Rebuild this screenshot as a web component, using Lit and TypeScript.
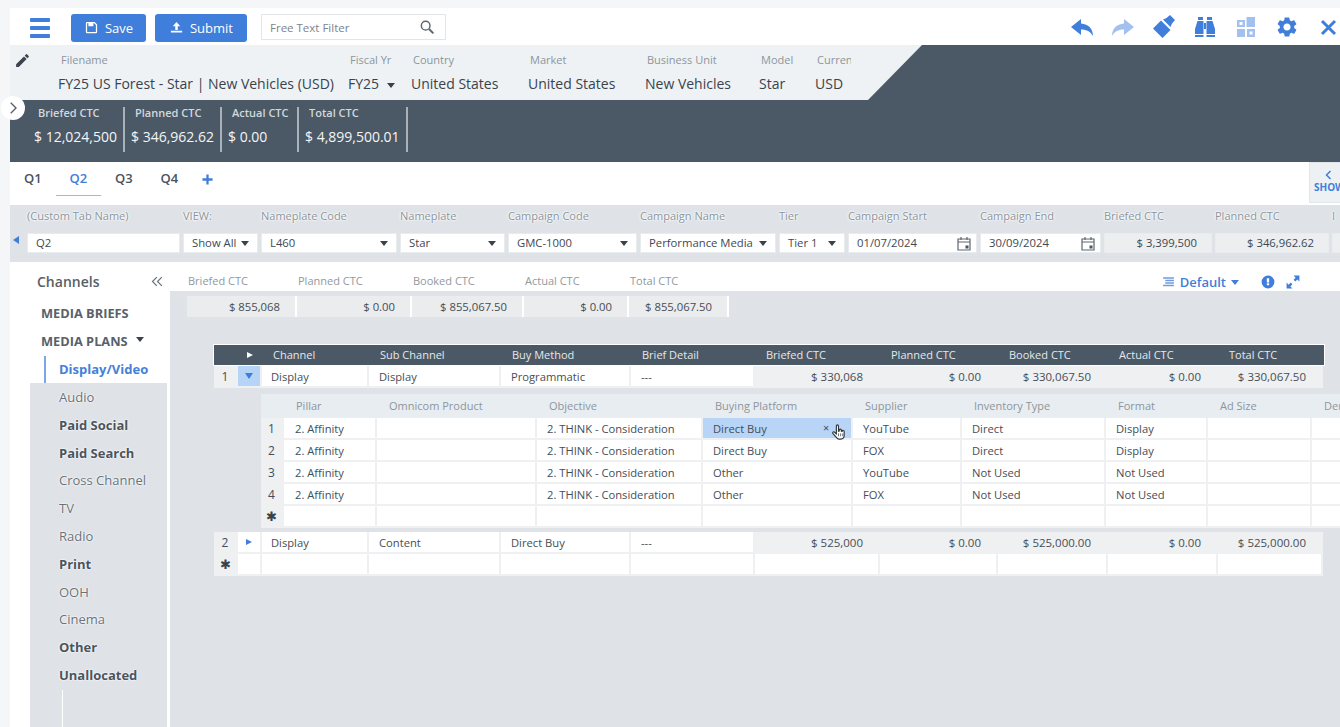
import { LitElement, html, css, svg } from "lit";
import { customElement } from "lit/decorators.js";

const ic = (body: unknown, cls = "ic") => html`<svg class=${cls} viewBox="0 0 24 24" fill="currentColor">${body}</svg>`;
const GEAR = "M19.14 12.94c.04-.3.06-.61.06-.94 0-.32-.02-.64-.07-.94l2.03-1.58a.49.49 0 0 0 .12-.61l-1.92-3.32a.488.488 0 0 0-.59-.22l-2.39.96c-.5-.38-1.03-.7-1.62-.94l-.36-2.54a.484.484 0 0 0-.48-.41h-3.84c-.24 0-.43.17-.47.41l-.36 2.54c-.59.24-1.13.57-1.62.94l-2.39-.96c-.22-.08-.47 0-.59.22L2.74 8.87c-.12.21-.08.47.12.61l2.03 1.58c-.05.3-.09.63-.09.94s.02.64.07.94l-2.03 1.58a.49.49 0 0 0-.12.61l1.92 3.32c.12.22.37.29.59.22l2.39-.96c.5.38 1.03.7 1.62.94l.36 2.54c.05.24.24.41.48.41h3.84c.24 0 .44-.17.47-.41l.36-2.54c.59-.24 1.13-.56 1.62-.94l2.39.96c.22.08.47 0 .59-.22l1.92-3.32c.12-.22.07-.47-.12-.61l-2.01-1.58zM12 15.6c-1.98 0-3.6-1.62-3.6-3.6s1.62-3.6 3.6-3.6 3.6 1.62 3.6 3.6-1.62 3.6-3.6 3.6z";

const cal = () => html`<svg class="cal" viewBox="0 0 14 15"><path d="M1 3h12v11H1z M1 6h12 M4 1v3 M10 1v3" fill="none" stroke="#5d6770" stroke-width="1.2"/><rect x="8.5" y="9.5" width="3" height="3" fill="#4a5560"/></svg>`;

const info = [
  ["Filename", "FY25 US Forest - Star | New Vehicles (USD)"],
  ["Fiscal Yr", "FY25"],
  ["Country", "United States"],
  ["Market", "United States"],
  ["Business Unit", "New Vehicles"],
  ["Model", "Star"],
  ["Currency", "USD"],
];
const totals = [
  ["Briefed CTC", "$ 12,024,500"],
  ["Planned CTC", "$ 346,962.62"],
  ["Actual CTC", "$ 0.00"],
  ["Total CTC", "$ 4,899,500.01"],
];
type F = { l: string; v: string; k: "text" | "sel" | "date" | "ro" };
const filters: F[] = [
  { l: "(Custom Tab Name)", v: "Q2", k: "text" },
  { l: "VIEW:", v: "Show All", k: "sel" },
  { l: "Nameplate Code", v: "L460", k: "sel" },
  { l: "Nameplate", v: "Star", k: "sel" },
  { l: "Campaign Code", v: "GMC-1000", k: "sel" },
  { l: "Campaign Name", v: "Performance Media", k: "sel" },
  { l: "Tier", v: "Tier 1", k: "sel" },
  { l: "Campaign Start", v: "01/07/2024", k: "date" },
  { l: "Campaign End", v: "30/09/2024", k: "date" },
  { l: "Briefed CTC", v: "$ 3,399,500", k: "ro" },
  { l: "Planned CTC", v: "$ 346,962.62", k: "ro" },
  { l: "I", v: "", k: "ro" },
];
const summary = [
  ["Briefed CTC", "$ 855,068"],
  ["Planned CTC", "$ 0.00"],
  ["Booked CTC", "$ 855,067.50"],
  ["Actual CTC", "$ 0.00"],
  ["Total CTC", "$ 855,067.50"],
];
const nav: [string, boolean][] = [
  ["Audio", false], ["Paid Social", true], ["Paid Search", true], ["Cross Channel", false],
  ["TV", false], ["Radio", false], ["Print", true], ["OOH", false], ["Cinema", false],
  ["Other", true], ["Unallocated", true],
];
const outerHead = ["Channel", "Sub Channel", "Buy Method", "Brief Detail", "Briefed CTC", "Planned CTC", "Booked CTC", "Actual CTC", "Total CTC"];
const subHead = ["Pillar", "Omnicom Product", "Objective", "Buying Platform", "Supplier", "Inventory Type", "Format", "Ad Size", "Demand"];
const subRows = [
  ["2. Affinity", "", "2. THINK - Consideration", "Direct Buy", "YouTube", "Direct", "Display", "", ""],
  ["2. Affinity", "", "2. THINK - Consideration", "Direct Buy", "FOX", "Direct", "Display", "", ""],
  ["2. Affinity", "", "2. THINK - Consideration", "Other", "YouTube", "Not Used", "Not Used", "", ""],
  ["2. Affinity", "", "2. THINK - Consideration", "Other", "FOX", "Not Used", "Not Used", "", ""],
  ["", "", "", "", "", "", "", "", ""],
];

@customElement("app-root")
export class AppRoot extends LitElement {
  static styles = css`
    :host { display: block; width: 1340px; height: 727px; overflow: hidden; font-family: "Open Sans", "Liberation Sans", sans-serif; color: #3b444d; background: #f5f6f7; }
    * { box-sizing: border-box; }
    .page { height: 727px; padding: 8px 0 0 10px; display: flex; flex-direction: column; position: relative; overflow: hidden; }
    .toolbar { height: 37px; flex: none; background: #fff; display: flex; align-items: center; padding-left: 20px; color: #3f7edb; }
    .burger { width: 20px; height: 20px; display: flex; flex-direction: column; justify-content: space-between; margin: 3px 21px 0 0; }
    .burger i { height: 4px; background: #3f7edb; border-radius: 1px; }
    .btn { height: 28px; background: #3f7edb; color: #fff; border-radius: 3px; display: flex; align-items: center; justify-content: center; gap: 6px; font-size: 13px; font-weight: 500; margin: 2px 9px 0 0; }
    .btn svg { width: 15px; height: 15px; }
    .save { width: 75px; }
    .submit { width: 92px; margin-right: 14px; }
    .search { width: 185px; height: 26px; border: 1px solid #e3e6e9; display: flex; align-items: center; justify-content: space-between; padding: 0 10px 0 8px; font-size: 11.5px; color: #7c858d; margin-top: 1px; }
    .search svg { width: 16px; height: 16px; color: #5e6770; }
    .tools { margin-left: auto; display: flex; gap: 17px; align-items: center; }
    .ic { width: 24px; height: 24px; display: block; }
    .light { color: #a3c1ee; }

    .banner { height: 117px; flex: none; background: #4b5966; display: flex; flex-direction: column; }
    .info { height: 55px; width: 912px; background: #eef2f5; clip-path: polygon(0 0, 100% 0, 858px 100%, 0 100%); display: grid; grid-template-columns: 48px 290px 63px 117px 117px 114px 56px 36px; font-size: 14px; }
    .pencil { color: #3b444d; padding: 7px 0 0 4px; }
    .pencil svg { width: 17px; height: 17px; }
    .fld { overflow: hidden; white-space: pre; }
    .fld b { display: block; font-weight: 400; font-size: 11px; color: #8d959d; margin: 7px 0 0 2px; height: 16px; line-height: 16px; }
    .fld:nth-child(2) b { margin-left: 3px; }
    .fld span { display: block; margin-top: 5px; line-height: 22px; color: #3a434b; }
    .caret { display: inline-block; width: 0; height: 0; border: 4px solid transparent; border-top: 5px solid #39424a; border-bottom: 0; vertical-align: middle; margin-left: 8px; }
    .totals { display: flex; height: 62px; align-items: flex-start; padding-top: 7px; color: #fff; }
    .tot { height: 45px; border-right: 2px solid #a9b1b9; padding-left: 6px; white-space: nowrap; }
    .tot:nth-child(1) { width: 115px; padding-left: 24px; }
    .tot:nth-child(2) { width: 97px; }
    .tot:nth-child(3) { width: 77px; }
    .tot:nth-child(4) { width: 109px; }
    .tot b { display: block; font-size: 11px; font-weight: 600; color: #d3d8dd; padding-left: 4px; line-height: 12px; }
    .tot span { display: block; font-size: 14px; font-weight: 500; margin-top: 8px; line-height: 20px; color: #f3f5f6; }
    .roundbtn { position: absolute; left: 1px; top: 96px; width: 24px; height: 24px; background: #fff; border-radius: 50%; display: flex; align-items: center; justify-content: center; color: #555f68; }
    .roundbtn svg { width: 18px; height: 18px; }

    .tabs { height: 43px; flex: none; background: #fff; display: flex; align-items: flex-start; position: relative; }
    .tab { width: 45.5px; height: 34px; font-size: 13px; font-weight: 600; line-height: 33px; text-align: center; color: #4a535c; }
    .tab.on { color: #3f7edb; border-bottom: 1px solid #9fb9dc; }
    .plus { width: 28px; height: 34px; color: #3f7edb; margin-left: 1px; display: flex; align-items: center; justify-content: center; }
    .plus svg { width: 11px; height: 11px; }
    .show { position: absolute; right: 0; top: 0; width: 31px; height: 41px; background: #eef1f4; border: 1px solid #e2e6ea; border-right: 0; color: #3f7edb; font-size: 10px; font-weight: 700; overflow: hidden; display: flex; flex-direction: column; padding: 6px 0 0 4px; line-height: 12px; }
    .show svg { width: 12px; height: 12px; margin-left: 9px; }

    .filter { height: 57px; flex: none; background: #dfe3e7; position: relative; padding: 6px 0 0 17px; display: grid; grid-template-columns: 153px 75px 136px 105px 129px 136px 66px 129px 121px 108px 114px 40px; column-gap: 3px; align-content: start; overflow: hidden; }
    .filter .mark { position: absolute; left: 3px; top: 31px; width: 0; height: 0; border: 4px solid transparent; border-right: 6px solid #3f7edb; border-left: 0; }
    .flab { font-size: 11px; color: #8b939b; height: 22px; line-height: 10px; white-space: nowrap; text-shadow: 0 0 2px #fff, 0 0 2px #fff, 0 0 3px #fff; }
    .fi { height: 20px; background: #fff; border: 1px solid #e9ecef; font-size: 11.3px; line-height: 18px; padding: 0 8px; display: flex; align-items: center; justify-content: space-between; white-space: nowrap; color: #3f4851; }
    .fi.ro { background: #eceeef; justify-content: flex-end; padding-right: 14px; }
    .fi .caret { margin: 0 0 0 4px; flex: none; }
    .cal { width: 14px; height: 15px; flex: none; margin-right: -3px; }
    .ff { min-width: 0; }

    .body { flex: 1; display: flex; min-height: 0; }
    .side { width: 158px; flex: none; background: #fff; display: flex; flex-direction: column; }
    .side-top { height: 121px; padding: 0 0 0 27px; position: relative; }
    .chan { display: flex; justify-content: space-between; align-items: center; height: 38px; padding-right: 3px; font-size: 14px; font-weight: 600; color: #565f68; margin-bottom: -1px; }
    .chan svg { width: 15px; height: 15px; color: #6b747c; }
    .mh { font-size: 12.8px; font-weight: 700; color: #58616a; padding-left: 4px; height: 28px; line-height: 28px; display: flex; align-items: center; }
    .mh .caret { margin-left: 8px; margin-top: -4px; }
    .cur { margin-left: 7px; border-left: 2px solid #7ea6e4; height: 27px; line-height: 26px; margin-top: 1px; padding-left: 13px; font-size: 13px; font-weight: 700; color: #4780d8; }
    .side-rest { flex: 1; margin: 0 1px 0 20px; padding-top: 1px; background: #dfe3e7; position: relative; }
    .nv { height: 27.8px; line-height: 27.8px; padding-left: 29px; font-size: 13px; color: #69727a; text-shadow: 0 0 2px #fff, 0 0 2px #fff; }
    .nv.b { font-weight: 700; color: #4b545d; }
    .side-rest .ln { margin-left: 32px; width: 1px; height: 45px; background: #fff; }

    .main { flex: 1; min-width: 0; background: #dfe3e7; border-left: 2px solid #fff; display: flex; flex-direction: column; }
    .mhead { height: 29px; background: #fff; display: flex; align-items: center; padding-right: 40px; flex: none; }
    .sumgrid { display: grid; grid-template-columns: 110px 115px 112px 105px 100px; margin-left: 18px; }
    .sl { font-size: 11px; color: #9199a1; line-height: 38px; height: 29px; }
    .sv { background: #ebeced; height: 21px; border-right: 2px solid #fff; font-size: 11.3px; line-height: 21px; text-align: right; padding-right: 15px; color: #454e57; }
    .sums { margin: 5px 0 0 17px; display: grid; grid-template-columns: 110px 115px 112px 105px 100px; flex: none; }
    .tr { margin-left: auto; display: flex; align-items: center; color: #3f7edb; font-size: 13px; font-weight: 600; padding-top: 11px; }
    .tr svg { width: 13px; height: 14px; }
    .tr .caret { border-top-color: #3f7edb; margin: 0 0 0 5px; }
    .tr .i { margin-left: 22px; width: 14px; height: 14px; }
    .tr .e { margin-left: 11px; width: 14px; height: 14px; }
    .tr .d { margin: 0 5px 0 0; color: #6f9be0; }

    .table { margin: 28px 0 0 44px; width: 1110px; flex: none; }
    .orow { display: grid; grid-template-columns: 24px 24px 107px 132px 130px 124px 125px 118px 110px 110px 105px; }
    .ohead { height: 20px; background: #4b5966; outline: 1px solid #fff; color: #e4e8ec; font-size: 11px; font-weight: 500; line-height: 19px; margin-bottom: 1px; }
    .ohead span { padding-left: 11px; white-space: nowrap; }
    .ohead .ar { padding: 0; display: flex; align-items: center; justify-content: center; }
    .tri { width: 0; height: 0; border: 3.5px solid transparent; border-left: 6px solid #fff; border-right: 0; }
    .tri.b { border-left-color: #3f7edb; }
    .tri.d { border: 4px solid transparent; border-top: 6px solid #3f7edb; border-bottom: 0; }
    .c { height: 22px; background: #fff; border-right: 2px solid #eef0f2; border-bottom: 2px solid #eef0f2; font-size: 11.2px; line-height: 21px; padding-left: 10px; white-space: nowrap; color: #454e57; overflow: hidden; }
    .c.first { padding-left: 9px; }
    .c.n { background: #eef0f2; padding: 0; text-align: center; font-size: 12px; }
    .c.n.st { font-size: 13px; color: #3a434b; }
    .c.a { padding: 0; display: flex; align-items: center; justify-content: center; }
    .c.a.on { background: #b6d4f5; }
    .c.v { background: #eff0f1; text-align: right; padding: 0 15px 0 0; font-size: 11.5px; }
    .subw { margin: 6px 0 4px 47px; width: 1081px; }
    .srow { display: grid; grid-template-columns: 23px 93px 160px 166px 150px 109px 144px 102px 104px 30px; }
    .shead { height: 24px; background: #e8edf1; font-size: 11px; font-weight: 500; color: #8d959d; line-height: 23px; }
    .shead span { padding-left: 12px; white-space: nowrap; }
    .srow .c { padding-left: 10px; overflow: visible; }
    .srow .c.first { padding-left: 11px; }
    .srow .c.n { padding: 0; }
    .c.sel { background: #b8d4f6; position: relative; }
    .x { position: absolute; left: 120px; top: -1px; font-size: 11px; color: #454e57; }
    .hand { position: absolute; left: 127px; top: 5px; width: 17px; height: 18px; }
  `;

  private oRow(num: string, on: boolean, cells: string[], arrow: boolean) {
    return html`<div class="orow">
      <div class="c n ${num === "✱" ? "st" : ""}">${num}</div>
      <div class="c a ${on ? "on" : ""}">${arrow ? html`<i class="tri b ${on ? "d" : ""}"></i>` : ""}</div>
      ${cells.map((t, i) => html`<div class="c ${i === 0 ? "first" : ""} ${i >= 4 && t ? "v" : ""}">${t}</div>`)}
    </div>`;
  }

  render() {
    return html`<div class="page">
      <div class="toolbar">
        <div class="burger"><i></i><i></i><i></i></div>
        <div class="btn save">${ic(svg`<path d="M17 3H5a2 2 0 0 0-2 2v14a2 2 0 0 0 2 2h14a2 2 0 0 0 2-2V7l-4-4zm2 16H5V5h11.2L19 7.8V19zM7 5h8v5H7z"/>`)}Save</div>
        <div class="btn submit">${ic(svg`<path d="M3 17h18v3H3zM12 3l6 7h-4v6h-4v-6H6z"/>`)}Submit</div>
        <div class="search">Free Text Filter ${ic(svg`<circle cx="10" cy="10" r="6.500" fill="none" stroke="currentColor" stroke-width="2.200"/><path d="M15 15l6.500 6.500" stroke="currentColor" stroke-width="3" fill="none"/>`)}</div>
        <div class="tools">
          ${ic(svg`<path d="M11 4L1 12l10 8v-5.500c4.500 0 9 1.200 12 6.500 0-7-4.500-12-12-12.500z"/>`)}
          ${ic(svg`<path d="M13 4l10 8-10 8v-5.500c-4.500 0-9 1.200-12 6.500 0-7 4.500-12 12-12.500z"/>`, "ic light")}
          ${ic(svg`<path d="M1 13.500l8-8 9.500 9.500-8 8zM11 4.500l3.500-1.500 3.500-3 5 5-3 3.500-1.500 3.500z"/>`)}
          ${ic(svg`<path d="M5 2h5v3H5zM14 2h5v3h-5zM4.500 6H10.500v13H2v-5zM13.500 6h6l2.500 8v5h-8.500zM11 8h2v6h-2zM2 20h8.500v2H2zM13.500 20H22v2h-8.500z"/>`)}
          ${ic(svg`<g fill="#a3c1ee"><path d="M3 5h8v7H3zM12.500 2H21v10h-8.500zM3 14h8v8H3zM13 14h8v8h-8z"/></g><g fill="#fff"><rect x="5.500" y="7" width="3" height="3"/><rect x="15.500" y="16.500" width="3" height="3"/></g>`)}
          ${ic(svg`<path d=${GEAR}/>`)}
          ${ic(svg`<path d="M6 6l13 13M19 6L6 19" stroke="currentColor" stroke-width="3" fill="none"/>`)}
        </div>
      </div>

      <div class="banner">
        <div class="info">
          <div class="pencil">${ic(svg`<path d="M3 17.250V21h3.750L17.800 9.940l-3.750-3.750zM20.700 7.040a1 1 0 0 0 0-1.410l-2.340-2.340a1 1 0 0 0-1.410 0l-1.830 1.830 3.750 3.750z"/>`)}</div>
          ${info.map(([l, v], i) => html`<div class="fld"><b>${l}</b><span>${v}${i === 1 ? html`<i class="caret"></i>` : ""}</span></div>`)}
        </div>
        <div class="totals">
          ${totals.map(([l, v]) => html`<div class="tot"><b>${l}</b><span>${v}</span></div>`)}
        </div>
      </div>
      <div class="roundbtn">${ic(svg`<path d="M9 5l7 7-7 7" fill="none" stroke="currentColor" stroke-width="1.800"/>`)}</div>

      <div class="tabs">
        <div class="tab">Q1</div><div class="tab on">Q2</div><div class="tab">Q3</div><div class="tab">Q4</div>
        <div class="plus">${ic(svg`<path d="M12 1v22M1 12h22" stroke="currentColor" stroke-width="5" fill="none"/>`)}</div>
        <div class="show">${ic(svg`<path d="M15 4l-8 8 8 8" fill="none" stroke="currentColor" stroke-width="3"/>`)}SHOW</div>
      </div>

      <div class="filter">
        <i class="mark"></i>
        ${filters.map((f) => html`<div class="ff"><div class="flab">${f.l}</div><div class="fi ${f.k === "ro" ? "ro" : ""}"><span>${f.v}</span>${f.k === "sel" ? html`<i class="caret"></i>` : ""}${f.k === "date" ? cal() : ""}</div></div>`)}
      </div>

      <div class="body">
        <div class="side">
          <div class="side-top">
            <div class="chan">Channels ${ic(svg`<path d="M11 5l-7 7 7 7M19 5l-7 7 7 7" fill="none" stroke="currentColor" stroke-width="2"/>`)}</div>
            <div class="mh">MEDIA BRIEFS</div>
            <div class="mh">MEDIA PLANS <i class="caret"></i></div>
            <div class="cur">Display/Video</div>
          </div>
          <div class="side-rest">
            ${nav.map(([t, b]) => html`<div class="nv ${b ? "b" : ""}">${t}</div>`)}
            <div class="ln"></div>
          </div>
        </div>
        <div class="main">
          <div class="mhead">
            <div class="sumgrid">${summary.map(([l]) => html`<div class="sl">${l}</div>`)}</div>
            <div class="tr">
              ${ic(svg`<path d="M2 3h20v3H2zM6 8h16v2.500H6zM6 12.500h16V15H6zM2 17h20v3H2z"/>`, "ic d")}Default<i class="caret"></i>
              ${ic(svg`<path d="M12 1a11 11 0 1 0 0 22 11 11 0 0 0 0-22zm2 16.500h-4v-3.500h4zM14 13h-4V5.500h4z"/>`, "ic i")}
              ${ic(svg`<path d="M13 1h10v10l-3.500-3.500L16 11l-3-3 3.500-3.500zM11 23H1V13l3.500 3.500L8 13l3 3-3.500 3.500z"/>`, "ic e")}
            </div>
          </div>
          <div class="sums">${summary.map(([, v]) => html`<div class="sv">${v}</div>`)}</div>

          <div class="table">
            <div class="orow ohead"><span></span><span class="ar"><i class="tri"></i></span>${outerHead.map((h) => html`<span>${h}</span>`)}</div>
            ${this.oRow("1", true, ["Display", "Display", "Programmatic", "---", "$ 330,068", "$ 0.00", "$ 330,067.50", "$ 0.00", "$ 330,067.50"], true)}
            <div class="subw">
              <div class="srow shead"><span></span>${subHead.map((h) => html`<span>${h}</span>`)}</div>
              ${subRows.map((r, ri) => html`<div class="srow">
                <div class="c n ${ri === 4 ? "st" : ""}">${ri === 4 ? "✱" : ri + 1}</div>
                ${r.map((t, ci) => ri === 0 && ci === 3
                  ? html`<div class="c sel">${t}<span class="x">×</span>
                      <svg class="hand" viewBox="0 0 24 24"><path d="M9 3.500a1.500 1.500 0 0 1 3 0V11l1-.2V9.500a1.500 1.500 0 0 1 3 0V11l1 .1a1.500 1.500 0 0 1 3 .4V17c0 3-2 5-5 5h-2c-2 0-3-1-4-2.500L4 14c-1-1.500.8-3 2-2l3 2.500z" fill="#fff" stroke="#2f363c" stroke-width="1.600"/><path d="M12 14v4M15 14v4M18 14v4" stroke="#2f363c" stroke-width="1"/></svg></div>`
                  : html`<div class="c ${ci === 0 ? "first" : ""}">${t}</div>`)}
              </div>`)}
            </div>
            ${this.oRow("2", false, ["Display", "Content", "Direct Buy", "---", "$ 525,000", "$ 0.00", "$ 525,000.00", "$ 0.00", "$ 525,000.00"], true)}
            ${this.oRow("✱", false, ["", "", "", "", "", "", "", "", ""], false)}
          </div>
        </div>
      </div>
    </div>`;
  }
}
